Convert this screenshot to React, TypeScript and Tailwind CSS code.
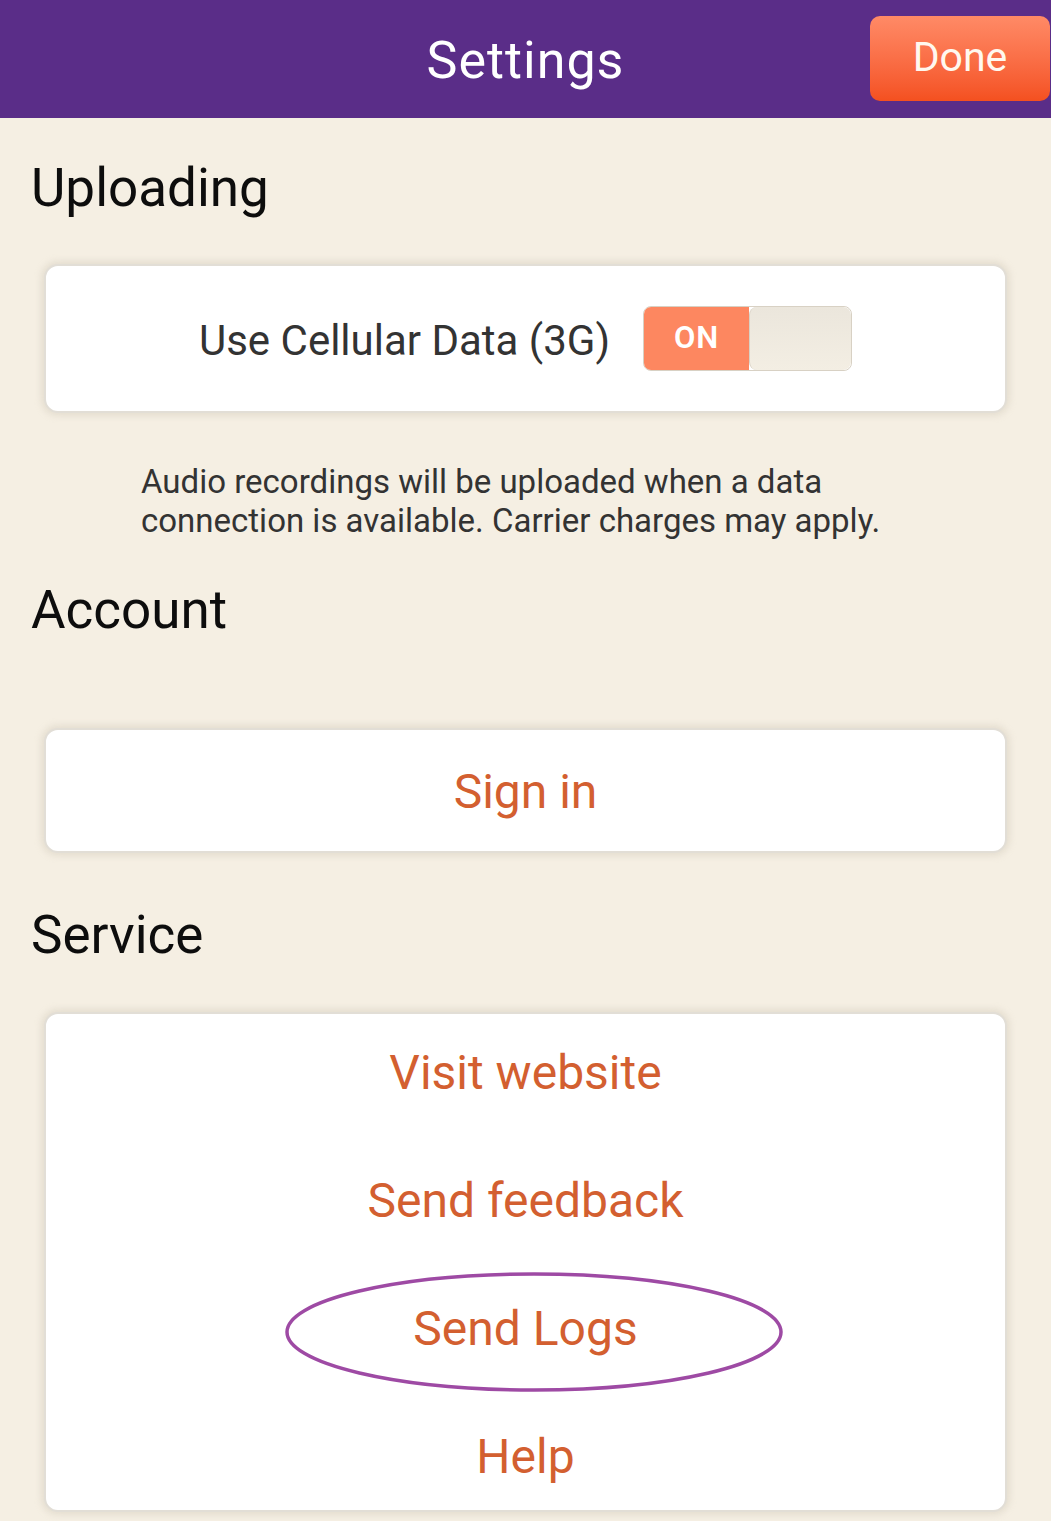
import React from "react";

const font = { fontFamily: "Roboto, 'Noto Sans', sans-serif" };

const Heading = ({ children, className = "" }: { children: React.ReactNode; className?: string }) => (
  <h2 className={`pl-[31px] text-[53px] leading-[64px] text-[#0d0d0d] ${className}`}>{children}</h2>
);

const Card = ({ children, className = "" }: { children: React.ReactNode; className?: string }) => (
  <div
    className={`mx-[44px] rounded-[14px] border-2 border-[#e2ded6] bg-white shadow-[0_0_6px_3px_rgba(200,192,176,0.35)] ${className}`}
  >
    {children}
  </div>
);

const LinkRow = ({ label }: { label: string }) => (
  <div className="flex h-[108px] items-center justify-center text-[48px] text-[#d35f30]">
    {label}
  </div>
);

const Toggle = () => (
  <div className="flex h-[65px] w-[209px] overflow-hidden rounded-[8px] border border-[#d8d1c4]">
    <div className="flex w-[105px] items-center justify-center bg-[#fd8760] text-[31px] font-semibold tracking-[1px] text-white">
      ON
    </div>
    <div className="flex-1 rounded-[8px] border-l border-[#d8d1c4] bg-gradient-to-b from-[#ebe6dc] to-[#f3eee3]" />
  </div>
);

export default function App() {
  return (
    <div className="min-h-[1521px] w-[1051px] overflow-hidden bg-[#f5efe3]" style={font}>
      {/* Header */}
      <div className="grid h-[118px] grid-cols-[1fr_auto_1fr] items-center bg-[#5a2d88]">
        <div />
        <div className="mt-[4px] text-[52px] tracking-[1px] text-white">Settings</div>
        <div className="flex justify-end pr-[1px]">
          <button className="mt-[-2px] flex h-[85px] w-[180px] items-center justify-center rounded-[10px] bg-gradient-to-b from-[#ff8a66] to-[#f4501f] text-[41px] text-[#fff8ef]">
            Done
          </button>
        </div>
      </div>

      {/* Uploading */}
      <Heading className="mt-[38px]">Uploading</Heading>
      <Card className="mt-[44px] flex h-[149px] items-center justify-center gap-[30px]">
        <span className="mt-[4px] pr-[3px] text-[42px] text-[#333]">Use Cellular Data (3G)</span>
        <Toggle />
      </Card>
      <p className="mt-[49px] pl-[141px] text-[33px] leading-[39px] text-[#333]">
        Audio recordings will be uploaded when a data
        <br />
        connection is available. Carrier charges may apply.
      </p>

      {/* Account */}
      <Heading className="mt-[38px]">Account</Heading>
      <Card className="mt-[86px] flex h-[125px] items-center justify-center">
        <span className="mt-[2px] text-[48px] text-[#d35f30]">Sign in</span>
      </Card>

      {/* Service */}
      <Heading className="mt-[50px]">Service</Heading>
      <Card className="relative mt-[45px] flex h-[500px] flex-col gap-[21px] pt-[6px]">
        <LinkRow label="Visit website" />
        <LinkRow label="Send feedback" />
        <LinkRow label="Send Logs" />
        <LinkRow label="Help" />
        {/* annotation ellipse */}
        <svg
          className="pointer-events-none absolute left-[238px] top-[257px]"
          width="500"
          height="122"
          viewBox="0 0 500 122"
        >
          <ellipse cx="250" cy="61" rx="247" ry="58" fill="none" stroke="#9e4aa4" strokeWidth="3.5" />
        </svg>
      </Card>
    </div>
  );
}
